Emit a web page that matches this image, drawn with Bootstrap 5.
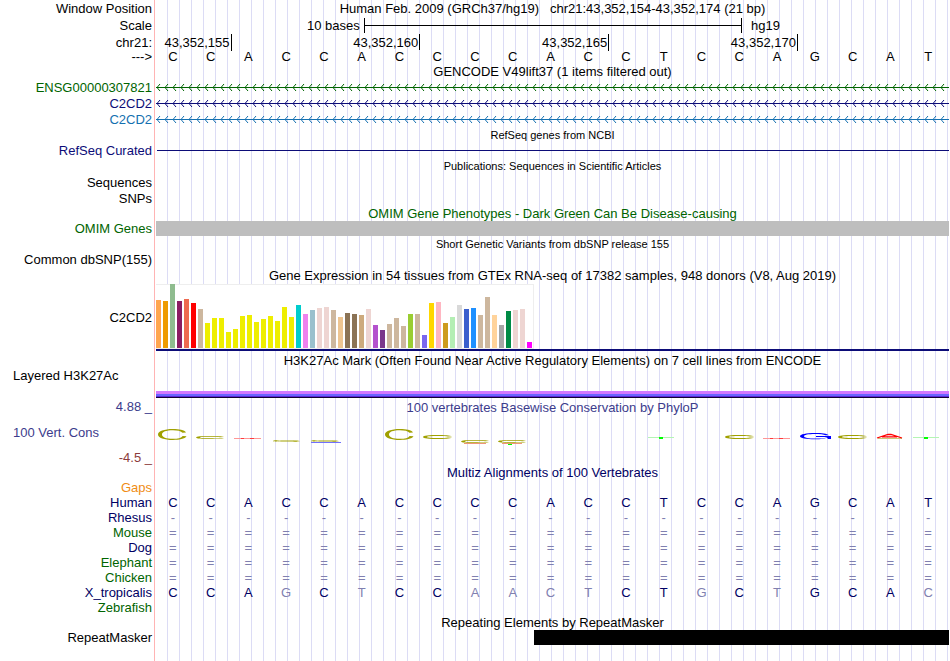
<!DOCTYPE html>
<html lang="en">
<head>
<meta charset="utf-8">
<meta name="viewport" content="width=device-width, initial-scale=1">
<title>Human chr21:43,352,154-43,352,174</title>
<link href="https://cdn.jsdelivr.net/npm/bootstrap@5.3.0/dist/css/bootstrap.min.css" rel="stylesheet">
<style>
body { font-family: "Liberation Sans", Arial, sans-serif; font-size: 13px; line-height: 15px; color: #000; background: #fff; }
.trk { display: flex; min-height: 15px; }
.trk.h14 { min-height: 14px; line-height: 14px; }
.trk.h16 { min-height: 16px; }
.trk.h17 { min-height: 17px; }
.trk.h18 { min-height: 18px; }
.side { flex: 0 0 155px; margin-right: 1px; padding: 0 2px 0 13px; border-right: 1px solid #ffb4b4; display: flex; align-items: center; justify-content: flex-end; white-space: nowrap; }
.side.start { justify-content: flex-start; }
.area { flex: 1 1 0; min-width: 0; margin-right: 1px; display: flex; flex-direction: column; justify-content: center; white-space: nowrap;
  background: repeating-linear-gradient(90deg, transparent 0 11px, #dcdcf5 11px 12px); }
.cap { text-align: center; white-space: pre; }
.fine { font-size: 11px; }
.green { color: #006400; }
.navy { color: #0c0c78; }
.deep { color: #000064; }
.blue { color: #1470b0; }
.slate { color: #3c3c8c; }
.maroon { color: #8c3c3c; }
.orange { color: #f08c14; }
.cells { display: grid; grid-template-columns: repeat(21, 1fr); text-align: center; margin: 0 2px 0 -2px; }
.pale { color: #8080b0; }
.ruler { display: grid; grid-template-columns: 2fr 5fr 5fr 5fr 4fr; height: 14px; line-height: 17px; }
.ruler span { text-align: right; padding-right: 1px; }
.ruler span:not(:last-child) { border-right: 1px solid #000; }
.scale-lead { width: 26.2%; text-align: right; padding-right: 4px; }
.scale-bar { width: 47.7%; height: 15px; border: solid #000; border-width: 0 1px; display: flex; align-items: center; }
.scale-bar i { flex: 1; height: 1px; background: #000; }
.scale-tail { padding-left: 9px; }
.strand { display: block; width: 100%; height: 16px; }
.rule { height: 1px; background: #0c0c78; margin-left: 1px; }
.omim { height: 15px; background: #bebebe; }
.gtex { height: 65px; width: 378px; max-width: 100%; background: #fff; border: solid #eee; border-width: 1px 1px 1px 0; display: flex; align-items: flex-end; gap: 2px; }
.gtex span { flex: 0 0 5px; }
.gtex-base { height: 2px; background: #0c0c78; }
.band i { display: block; height: 1px; }
.band .b1 { height: 3px; background: #d278ff; }
.band .b2 { height: 2px; background: #6a64ff; }
.band .b3 { background: #5a28dc; }
.band .b4 { background: #140032; }
.logo { display: block; width: 100%; height: 34px; }
.mask { height: 15px; background: #000; margin-left: 47.7%; }
</style>
<script src="https://cdn.jsdelivr.net/npm/bootstrap@5.3.0/dist/js/bootstrap.bundle.min.js"></script>
</head>
<body>
<svg width="0" height="0" class="position-absolute" aria-hidden="true">
  <symbol id="lc" viewBox="0 0 29 12" preserveAspectRatio="none"><path d="M28.5 8C27 11 21 12 15 12 6 12 0 9.5 0 6 0 2.5 6 0 15 0c6 0 11.500 1 13 3.800L24.500 4.200C23 2 19.500 1.300 15 1.300 8 1.300 4 3 4 6s4 4.700 11 4.700c5 0 8.500-.9 9.700-3.100Z"/></symbol>
  <symbol id="lcflat" viewBox="0 0 29 4" preserveAspectRatio="none"><path d="M29 2.800C27 3.700 21 4 15 4 6 4 0 3.400 0 2 0 .6 6 0 15 0c6 0 12 .3 14 1.200L25 1.500C23 1.100 20 1 15 1 8 1 4 1.300 4 2s4 1 11 1c5 0 8-.1 10-.5Z"/></symbol>
</svg>
<main class="d-flex flex-column min-vh-100">
  <div class="trk h16"><div class="side">Window Position</div><div class="area"><div class="cap">Human Feb. 2009 (GRCh37/hg19)   chr21:43,352,154-43,352,174 (21 bp)</div></div></div>
  <div class="trk h18"><div class="side">Scale</div><div class="area"><div class="d-flex align-items-center"><span class="scale-lead">10 bases</span><span class="scale-bar"><i></i></span><span class="scale-tail">hg19</span></div></div></div>
  <div class="trk h16"><div class="side">chr21:</div><div class="area justify-content-start"><div class="ruler"><span>43,352,155</span><span>43,352,160</span><span>43,352,165</span><span>43,352,170</span><span></span></div></div></div>
  <div class="trk h14"><div class="side">---&gt;</div><div class="area"><div class="cells" data-seq="CCACCACCCCACCTCCAGCAT"></div></div></div>
  <div class="trk"><div class="side"></div><div class="area justify-content-end"><div class="cap">GENCODE V49lift37 (1 items filtered out)</div></div></div>
  <div class="trk h16 green"><div class="side">ENSG00000307821</div><div class="area"><svg class="strand"></svg></div></div>
  <div class="trk h16 navy"><div class="side">C2CD2</div><div class="area"><svg class="strand"></svg></div></div>
  <div class="trk h16 blue"><div class="side">C2CD2</div><div class="area"><svg class="strand"></svg></div></div>
  <div class="trk h16"><div class="side"></div><div class="area"><div class="cap fine">RefSeq genes from NCBI</div></div></div>
  <div class="trk navy"><div class="side">RefSeq Curated</div><div class="area"><div class="rule"></div></div></div>
  <div class="trk h16"><div class="side"></div><div class="area"><div class="cap fine">Publications: Sequences in Scientific Articles</div></div></div>
  <div class="trk h16"><div class="side">Sequences</div><div class="area"></div></div>
  <div class="trk h16"><div class="side">SNPs</div><div class="area"></div></div>
  <div class="trk green"><div class="side"></div><div class="area"><div class="cap">OMIM Gene Phenotypes - Dark Green Can Be Disease-causing</div></div></div>
  <div class="trk green"><div class="side">OMIM Genes</div><div class="area"><div class="omim"></div></div></div>
  <div class="trk h16"><div class="side"></div><div class="area"><div class="cap fine">Short Genetic Variants from dbSNP release 155</div></div></div>
  <div class="trk"><div class="side">Common dbSNP(155)</div><div class="area"></div></div>
  <div class="trk h17"><div class="side"></div><div class="area"><div class="cap">Gene Expression in 54 tissues from GTEx RNA-seq of 17382 samples, 948 donors (V8, Aug 2019)</div></div></div>
  <div class="trk"><div class="side">C2CD2</div><div class="area"><div class="gtex" id="gtex"></div><div class="gtex-base"></div></div></div>
  <div class="trk h17"><div class="side"></div><div class="area justify-content-end"><div class="cap">H3K27Ac Mark (Often Found Near Active Regulatory Elements) on 7 cell lines from ENCODE</div></div></div>
  <div class="trk"><div class="side start">Layered H3K27Ac</div><div class="area"></div></div>
  <div class="trk"><div class="side"></div><div class="area justify-content-end"><div class="band"><i class="b1"></i><i class="b2"></i><i class="b3"></i><i class="b4"></i></div></div></div>
  <div class="trk h17 slate"><div class="side">4.88 _</div><div class="area justify-content-end"><div class="cap">100 vertebrates Basewise Conservation by PhyloP</div></div></div>
  <div class="trk slate"><div class="side start">100 Vert. Cons</div><div class="area">
    <svg class="logo" viewBox="156 415 793 34" preserveAspectRatio="none" role="img" aria-label="Conservation logo">
      <g fill="#a0a000">
        <use href="#lc" x="158" y="429" width="29" height="11"/>
        <use href="#lcflat" x="196" y="436" width="28" height="3"/>
        <use href="#lcflat" x="273" y="440" width="27" height="2"/>
        <use href="#lcflat" x="311" y="440" width="28" height="2"/>
        <use href="#lc" x="385" y="429" width="29" height="11"/>
        <use href="#lcflat" x="423" y="435" width="29" height="4"/>
        <use href="#lcflat" x="461" y="440" width="28" height="3"/>
        <use href="#lcflat" x="498" y="440" width="28" height="3"/>
        <use href="#lcflat" x="725" y="435" width="29" height="4"/>
        <use href="#lcflat" x="838" y="435" width="29" height="4"/>
      </g>
      <g fill="none" stroke-width="1">
        <path stroke="#ff9696" d="M234 438.500H261M763 438.500H790"/>
        <path stroke="#ff3c3c" d="M241 438.500H244M250 438.500H254M770 438.500H773M779 438.500H783"/>
        <path stroke="#7070ff" d="M311 442.500H341"/>
        <path stroke="#f09678" d="M464 443.500H486M502 443.500H522"/>
        <path stroke="#b4f5b4" d="M648 437.500H674M913 437.500H939"/>
        <path stroke="#c8c878" d="M878 438.500H902"/>
        <path stroke="#ff0000" stroke-width="1.300" d="M877 438 888 434.500H891L902 438M882 436.800H897"/>
      </g>
      <path fill="#00ff00" d="M508 444h4v1h-4zM659 437h4v2h-4zM924 437h4v2h-4z"/>
      <path fill="#0000ff" d="M829 435.200C827 433.600 822 433 815 433 806 433 800 434.300 800 436.200 800 438 806 439.300 815 439.300 821 439.300 825 438.700 827 437.800L828 439H831V436H816V436.900H827C826 438 821 438.500 816 438.500 808 438.500 804 437.600 804 436.200 804 434.700 808 433.900 815 433.900 820 433.900 824 434.300 825.500 435.300Z"/>
    </svg></div></div>
  <div class="trk h16 maroon"><div class="side">-4.5 _</div><div class="area"></div></div>
  <div class="trk deep"><div class="side"></div><div class="area"><div class="cap">Multiz Alignments of 100 Vertebrates</div></div></div>
  <div class="trk orange"><div class="side">Gaps</div><div class="area"></div></div>
  <div class="trk deep"><div class="side">Human</div><div class="area"><div class="cells" data-seq="CCACCACCCCACCTCCAGCAT"></div></div></div>
  <div class="trk deep"><div class="side">Rhesus</div><div class="area"><div class="cells pale" data-seq="---------------------"></div></div></div>
  <div class="trk green"><div class="side">Mouse</div><div class="area"><div class="cells pale" data-seq="====================="></div></div></div>
  <div class="trk deep"><div class="side">Dog</div><div class="area"><div class="cells pale" data-seq="====================="></div></div></div>
  <div class="trk green"><div class="side">Elephant</div><div class="area"><div class="cells pale" data-seq="====================="></div></div></div>
  <div class="trk green"><div class="side">Chicken</div><div class="area"><div class="cells pale" data-seq="====================="></div></div></div>
  <div class="trk deep"><div class="side">X_tropicalis</div><div class="area"><div class="cells" data-seq="CCAgCtCCaactCTgCtGCAc"></div></div></div>
  <div class="trk green"><div class="side">Zebrafish</div><div class="area"></div></div>
  <div class="trk"><div class="side"></div><div class="area"><div class="cap">Repeating Elements by RepeatMasker</div></div></div>
  <div class="trk"><div class="side">RepeatMasker</div><div class="area"><div class="mask"></div></div></div>
  <div class="trk flex-grow-1"><div class="side"></div><div class="area"></div></div>
</main>
<script>
// Aligned bases: lower case marks a base that differs from human.
document.querySelectorAll('[data-seq]').forEach(function (row) {
  row.dataset.seq.split('').forEach(function (base) {
    var cell = document.createElement('span');
    cell.textContent = base.toUpperCase();
    if (/[a-z]/.test(base)) cell.className = 'pale';
    row.appendChild(cell);
  });
});
// Reverse-strand arrows, one every 8px along the intron line.
document.querySelectorAll('.strand').forEach(function (svg, n) {
  svg.innerHTML = '<defs><pattern id="strand' + n + '" width="8" height="16" patternUnits="userSpaceOnUse">' +
    '<path d="M0 8.500H8" stroke="currentColor"/><path d="M4 5 1 8.500 4 12" fill="none" stroke="currentColor" stroke-width="1"/></pattern></defs>' +
    '<rect width="100%" height="16" fill="url(#strand' + n + ')"/>';
});
// Median expression per tissue: heights in pixels, then colours.
var h = [48,47,64,47,49,45,39,25,30,30,16,19,32,33,26,29,32,27,41,31,43,34,38,40,41,38,31,35,34,33,39,23,18,24,30,22,34,34,13,45,46,25,31,43,39,40,33,51,33,23,37,38,39,6];
var c = ('ffa54f ee9a00 8fbc8f 8b1c62 ee6a50 ff0000 cdb79e' + ' eeee00'.repeat(13) +
  ' 00cdcd ee82ee 9ac0cd eed5d2 eed5d2 cdb79e eec591 8b7355 8b7355 cdaa7d eed5d2 b452cd 7a378b cdb79e cdb79e cdb79e 9acd32 cdb79e 7a67ee ffd700 ffb6c1 cd9b1d b4eeb4 d9d9d9 3a5fcd 1e90ff cdb79e cdb79e ffd39b a6a6a6 008b45 eed5d2 eed5d2 ff00ff').split(' ');
h.forEach(function (v, i) {
  var bar = document.createElement('span');
  bar.style.height = v + 'px';
  bar.style.backgroundColor = '#' + c[i];
  document.getElementById('gtex').appendChild(bar);
});
</script>
</body>
</html>
